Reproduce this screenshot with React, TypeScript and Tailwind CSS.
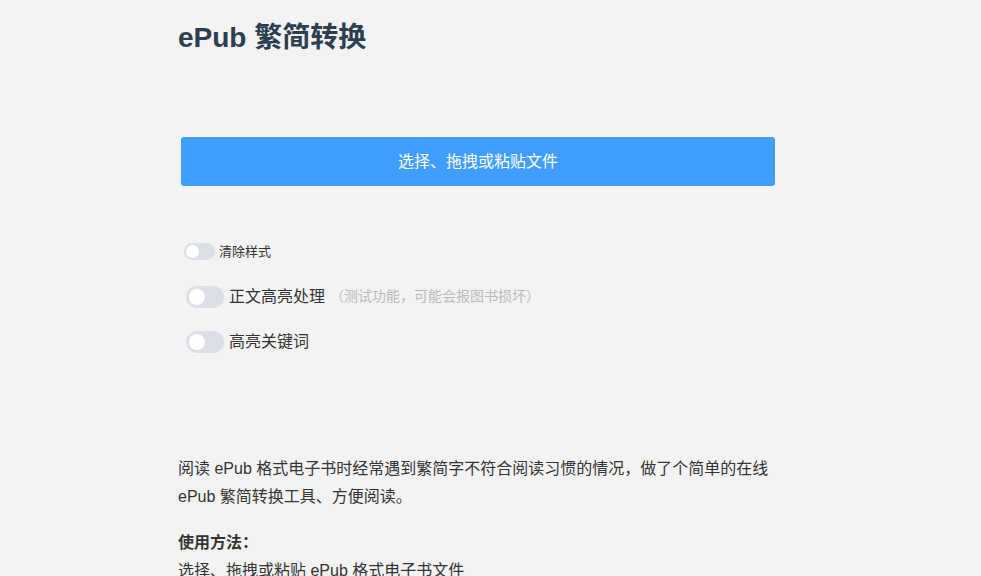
import { useState } from 'react'

const font = 'font-["Liberation_Sans","Noto_Sans_CJK_SC",sans-serif]'

function Toggle({ small, on, onChange }: { small?: boolean; on: boolean; onChange: () => void }) {
  return (
    <button
      onClick={onChange}
      className={
        small
          ? 'relative h-[17px] w-[31px] shrink-0 rounded-full bg-[#dcdfe6]'
          : 'relative h-[22px] w-[38px] shrink-0 rounded-full bg-[#dcdfe6]'
      }
    >
      <span
        className={
          small
            ? 'absolute left-[2px] top-[2px] h-[13px] w-[13px] rounded-full bg-white'
            : 'absolute left-[3px] top-[3px] h-[16px] w-[16px] rounded-full bg-white'
        }
      />
    </button>
  )
}

export default function App() {
  const [clean, setClean] = useState(false)
  const [highlight, setHighlight] = useState(false)
  const [keywords, setKeywords] = useState(false)

  return (
    <div className={`min-h-screen bg-[#f3f3f3] ${font}`}>
      <div className="mx-auto w-[625px] pt-[18px]">
        <h1 className="text-[28px] font-bold leading-[40px] text-[#2c3e50]">ePub 繁简转换</h1>

        <button className="ml-[3px] mt-[79px] h-[49px] w-[594px] rounded-[3px] bg-[#409eff] text-[16px] text-white">
          选择、拖拽或粘贴文件
        </button>

        {/* options */}
        <div className="ml-[6px] mt-[56px] flex flex-col">
          <label className="flex items-center gap-[4px] text-[13px] text-[#333]">
            <Toggle small on={clean} onChange={() => setClean(!clean)} />
            清除样式
          </label>
          <label className="ml-[2px] mt-[23px] flex items-center gap-[5px] text-[16px] text-[#333]">
            <Toggle on={highlight} onChange={() => setHighlight(!highlight)} />
            正文高亮处理
            <span className="text-[14px] text-[#bbb]">（测试功能，可能会报图书损坏）</span>
          </label>
          <label className="ml-[2px] mt-[21px] flex items-center gap-[5px] text-[16px] text-[#333]">
            <Toggle on={keywords} onChange={() => setKeywords(!keywords)} />
            高亮关键词
          </label>
        </div>

        <div className="mt-[101px] w-[600px] text-[16px] leading-[28px] text-[#333]">
          <p>阅读 ePub 格式电子书时经常遇到繁简字不符合阅读习惯的情况，做了个简单的在线 ePub 繁简转换工具、方便阅读。</p>
          <p className="mt-[18px] font-bold">使用方法：</p>
          <p>选择、拖拽或粘贴 ePub 格式电子书文件</p>
        </div>
      </div>
    </div>
  )
}
